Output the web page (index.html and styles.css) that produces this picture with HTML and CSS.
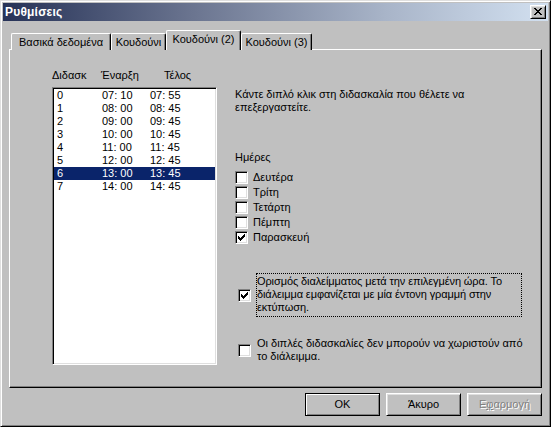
FILE: index.html
```html
<!DOCTYPE html>
<html>
<head>
<meta charset="utf-8">
<title>Ρυθμίσεις</title>
<link rel="stylesheet" href="styles.css">
</head>
<body>
<div class="window">
  <div class="titlebar">
    <span class="title">Ρυθμίσεις</span>
    <span class="close"><svg width="8" height="7" viewBox="0 0 8 7"><path d="M0 0h2v1H0z M6 0h2v1H6z M1 1h2v1H1z M5 1h2v1H5z M2 2h4v1H2z M3 3h2v1H3z M2 4h4v1H2z M1 5h2v1H1z M5 5h2v1H5z M0 6h2v1H0z M6 6h2v1H6z" fill="#000"/></svg></span>
  </div>
  <div class="tabs">
    <div class="tab t1">Βασικά δεδομένα</div>
    <div class="tab t2">Κουδούνι</div>
    <div class="tab t3 sel">Κουδούνι (2)</div>
    <div class="tab t4">Κουδούνι (3)</div>
  </div>
  <div class="panel">
    <div class="left">
      <div class="hdr"><span>Διδασκ</span><span>Έναρξη</span><span>Τέλος</span></div>
      <div class="list">
        <div class="row"><span>0</span><span>07: 10</span><span>07: 55</span></div>
        <div class="row"><span>1</span><span>08: 00</span><span>08: 45</span></div>
        <div class="row"><span>2</span><span>09: 00</span><span>09: 45</span></div>
        <div class="row"><span>3</span><span>10: 00</span><span>10: 45</span></div>
        <div class="row"><span>4</span><span>11: 00</span><span>11: 45</span></div>
        <div class="row"><span>5</span><span>12: 00</span><span>12: 45</span></div>
        <div class="row selected"><span>6</span><span>13: 00</span><span>13: 45</span></div>
        <div class="row"><span>7</span><span>14: 00</span><span>14: 45</span></div>
      </div>
    </div>
    <div class="right">
      <p class="info">Κάντε διπλό κλικ στη διδασκαλία που θέλετε να<br>επεξεργαστείτε.</p>
      <div class="days-label">Ημέρες</div>
      <div class="days">
        <div class="chk"><span class="box"></span><span>Δευτέρα</span></div>
        <div class="chk"><span class="box"></span><span>Τρίτη</span></div>
        <div class="chk"><span class="box"></span><span>Τετάρτη</span></div>
        <div class="chk"><span class="box"></span><span>Πέμπτη</span></div>
        <div class="chk"><span class="box"><svg width="11" height="11" viewBox="0 0 11 11"><path d="M2 4h1v3H2z M3 5h1v3H3z M4 6h1v3H4z M5 5h1v3H5z M6 4h1v3H6z M7 3h1v3H7z M8 2h1v3H8z" fill="#000"/></svg></span><span>Παρασκευή</span></div>
      </div>
      <div class="opt opt1">
        <span class="box"><svg width="11" height="11" viewBox="0 0 11 11"><path d="M2 4h1v3H2z M3 5h1v3H3z M4 6h1v3H4z M5 5h1v3H5z M6 4h1v3H6z M7 3h1v3H7z M8 2h1v3H8z" fill="#000"/></svg></span>
        <span class="otext focus">Ορισμός διαλείμματος μετά την επιλεγμένη ώρα. Το<br>διάλειμμα εμφανίζεται με μία έντονη γραμμή στην<br>εκτύπωση.</span>
      </div>
      <div class="opt opt2">
        <span class="box"></span>
        <span class="otext">Οι διπλές διδασκαλίες δεν μπορούν να χωριστούν από<br>το διάλειμμα.</span>
      </div>
    </div>
  </div>
  <div class="buttons">
    <div class="btn default">OK</div>
    <div class="btn">Άκυρο</div>
    <div class="btn disabled">Ε<u>φ</u>αρμογή</div>
  </div>
</div>
</body>
</html>
```

FILE: styles.css
```css
* {
  box-sizing: border-box;
}

html, body {
  margin: 0;
  padding: 0;
}

body {
  background: #c0c0c0;
  font-family: "Liberation Sans", Arial, sans-serif;
  font-size: 11px;
  line-height: 13px;
  color: #000;
}

.window {
  width: 551px;
  height: 427px;
  background: #c0c0c0;
  border: 1px solid;
  border-color: #dfdfdf #000 #000 #dfdfdf;
  box-shadow: inset 1px 1px #fff, inset -1px -1px #808080;
  padding: 2px;
  display: flex;
  flex-direction: column;
}

.titlebar {
  height: 18px;
  flex: none;
  display: flex;
  align-items: center;
  justify-content: space-between;
  padding: 0 2px;
  background: linear-gradient(to right, #263257 0%, #6b7590 35%, #a8b4c8 70%, #d2e0f0 100%);
}

.title {
  color: #fff;
  font-weight: bold;
  font-size: 12px;
  letter-spacing: 0.2px;
  line-height: 18px;
}

.close {
  display: block;
  width: 16px;
  height: 14px;
  padding: 2px 0 0 3px;
  background: #c0c0c0;
  border: 1px solid;
  border-color: #fff #000 #000 #fff;
  box-shadow: inset 1px 1px #dfdfdf, inset -1px -1px #808080;
}

.close svg {
  display: block;
}

.tabs {
  display: flex;
  align-items: flex-end;
  height: 20px;
  margin: 9px 0 -1px 8px;
  position: relative;
  z-index: 1;
  flex: none;
}

.tab {
  height: 17px;
  padding-top: 2px;
  text-align: center;
  white-space: nowrap;
  background: #c0c0c0;
  border: 1px solid;
  border-color: #fff #000 transparent #fff;
  border-bottom: none;
  border-radius: 2px 2px 0 0;
  box-shadow: inset -1px 0 #808080;
}

.tab.sel {
  height: 20px;
}

.t1 { width: 100px; }
.t2 { width: 55px; }
.t3 { width: 75px; }
.t4 { width: 71px; }

.panel {
  height: 339px;
  flex: none;
  margin: 0 6px;
  padding: 19px 0 0 42px;
  display: flex;
  align-items: flex-start;
  border: 1px solid;
  border-color: #fff #000 #000 #fff;
  box-shadow: inset -1px -1px #808080;
}

.left {
  width: 165px;
  flex: none;
}

.hdr {
  display: grid;
  grid-template-columns: 49px 63px auto;
  height: 13px;
  white-space: nowrap;
}

.list {
  margin-top: 5px;
  width: 165px;
  height: 278px;
  background: #fff;
  border: 1px solid;
  border-color: #808080 #fff #fff #808080;
  box-shadow: inset 1px 1px #000, inset -1px -1px #dfdfdf;
  padding: 1px;
}

.row {
  display: grid;
  grid-template-columns: 45px 48px auto;
  height: 13px;
  padding-left: 3px;
  white-space: nowrap;
}

.row.selected {
  background: #0a246a;
  color: #fff;
}

.right {
  margin-left: 18px;
  flex: 1;
}

.info {
  margin: 19px 0 0;
  white-space: nowrap;
}

.days-label {
  margin-top: 37px;
}

.days {
  margin-top: 6px;
}

.chk {
  display: flex;
  align-items: center;
  gap: 5px;
  height: 15px;
}

.box {
  display: block;
  flex: none;
  width: 13px;
  height: 13px;
  background: #fff;
  border: 1px solid;
  border-color: #808080 #fff #fff #808080;
  box-shadow: inset 1px 1px #000, inset -1px -1px #dfdfdf;
}

.box svg {
  display: block;
}

.opt {
  display: flex;
  align-items: center;
  gap: 5px;
  padding-left: 3px;
}

.opt1 {
  margin-top: 28px;
}

.opt2 {
  margin-top: 18px;
}

.otext {
  display: block;
  width: 270px;
  white-space: nowrap;
  padding: 1px 0 2px 0;
  border: 1px dotted transparent;
}

.otext.focus {
  border-color: #000;
  width: 266px;
  letter-spacing: -0.1px;
}

.buttons {
  display: flex;
  justify-content: flex-end;
  gap: 6px;
  margin: 5px 6px 0 0;
  flex: none;
}

.btn {
  width: 75px;
  height: 23px;
  line-height: 21px;
  text-align: center;
  background: #c0c0c0;
  border: 1px solid;
  border-color: #fff #000 #000 #fff;
  box-shadow: inset 1px 1px #dfdfdf, inset -1px -1px #808080;
}

.btn.default {
  border-color: #000;
  box-shadow: inset 1px 1px #fff, inset -1px -1px #808080;
}

.btn.disabled {
  color: #808080;
  text-shadow: 1px 1px #fff;
}
```
